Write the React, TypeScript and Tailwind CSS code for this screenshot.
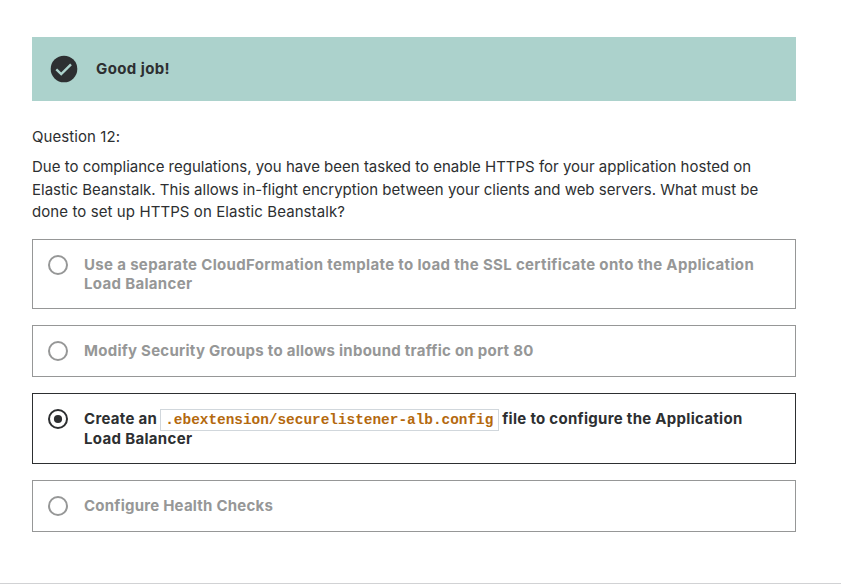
import React from "react";

const sans = "font-['Inter','Liberation_Sans',sans-serif]";

function Radio({ checked }: { checked?: boolean }) {
  return (
    <svg viewBox="0 0 20 20" className="h-5 w-5 shrink-0" fill="none">
      <circle cx="10" cy="10" r="9" stroke="currentColor" strokeWidth="2" />
      {checked && <circle cx="10" cy="10" r="4.1" fill="currentColor" />}
    </svg>
  );
}

function Option({
  checked,
  height,
  children,
}: {
  checked?: boolean;
  height: string;
  children: React.ReactNode;
}) {
  const tone = checked ? "border-[#2d2f31] text-[#2d2f31]" : "border-[#969797] text-[#969797]";
  return (
    <li className={`flex items-start gap-4 border px-[15px] pt-[15px] ${height} ${tone}`}>
      <Radio checked={checked} />
      <div className="text-[15px] leading-[19px] font-bold whitespace-nowrap">{children}</div>
    </li>
  );
}

export default function App() {
  return (
    <div className={`h-[584px] overflow-hidden border-b border-[#d1d2d4] bg-white pt-[37px] pl-8 text-[#2d2f31] ${sans}`}>
      <main className="w-[764px]">
        <div className="flex h-16 items-center bg-[#acd2cc] pl-[18px]">
          <svg viewBox="0 0 28 28" className="h-7 w-7">
            <circle cx="14" cy="14" r="13.3" fill="#2d2f31" />
            <path d="M6.3 14.4l4.9 4.7 9.8-9.8" fill="none" stroke="#acd2cc" strokeWidth="2.4" />
          </svg>
          <span className="ml-[18px] text-[15px] font-bold tracking-[0.4px]">Good job!</span>
        </div>
        <div className="mt-[25px] text-[15px] leading-[22px] tracking-[0.08px]">Question 12:</div>
        <div className="mt-2 text-[15px] whitespace-nowrap">
          <div className="leading-[22px]">Due to compliance regulations, you have been tasked to enable HTTPS for your application hosted on</div>
          <div className="leading-6 tracking-[-0.01px]">Elastic Beanstalk. This allows in-flight encryption between your clients and web servers. What must be</div>
          <div className="pb-[2px] leading-[19px] tracking-[0.09px]">done to set up HTTPS on Elastic Beanstalk?</div>
        </div>
        <ul className="mt-4 flex flex-col gap-4">
          <Option height="h-[70px]">
            <div className="tracking-[0.335px]">Use a separate CloudFormation template to load the SSL certificate onto the Application</div>
            <div className="tracking-[0.32px]">Load Balancer</div>
          </Option>
          <Option height="h-[52px]">
            <span className="tracking-[0.26px]">Modify Security Groups to allows inbound traffic on port 80</span>
          </Option>
          <Option checked height="h-[71px]">
            <div className="flex h-5 items-start">
              <span className="tracking-[0.3px]">Create an</span>
              <code className="ml-[3px] flex h-[22px] w-[339px] shrink-0 items-center border border-[#d1d7dc] pl-[4px] font-['Liberation_Mono',monospace] text-[14.4px] text-[#b4690e]">
                .ebextension/securelistener-alb.config
              </code>
              <span className="ml-[3px] tracking-[0.29px]">file to configure the Application</span>
            </div>
            <div className="tracking-[0.32px]">Load Balancer</div>
          </Option>
          <Option height="h-[52px]">
            <span className="tracking-[0.23px]">Configure Health Checks</span>
          </Option>
        </ul>
      </main>
    </div>
  );
}
